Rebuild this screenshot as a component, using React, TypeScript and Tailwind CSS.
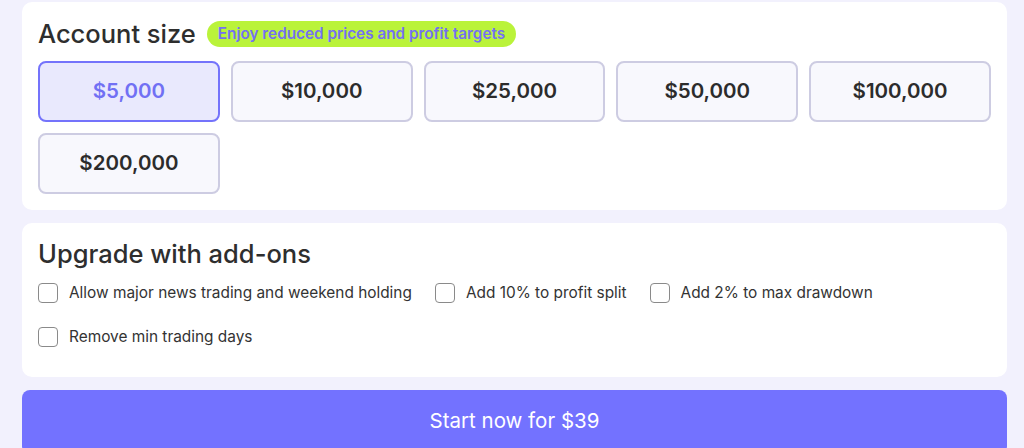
import { useState } from "react";

const sizes = ["$5,000", "$10,000", "$25,000", "$50,000", "$100,000", "$200,000"];

const addons = [
  "Allow major news trading and weekend holding",
  "Add 10% to profit split",
  "Add 2% to max drawdown",
  "Remove min trading days",
];

export default function App() {
  const [selected, setSelected] = useState(0);
  const [checked, setChecked] = useState<boolean[]>([false, false, false, false]);

  return (
    <div
      className="w-[1024px] h-[448px] overflow-hidden bg-[#f2f1fd] pl-[22px] pr-[17px] pt-[2px] flex flex-col gap-[13px]"
      style={{ fontFamily: "Inter, 'Noto Sans', sans-serif" }}
    >
      {/* Account size */}
      <section className="bg-white rounded-[10px] px-4 pt-[16px] pb-4">
        <div className="flex items-center gap-[11px]">
          <h2 className="text-[25.5px] font-medium text-[#2e2e2e] leading-[31px]">Account size</h2>
          <span className="rounded-full bg-[#baf33a] px-[11px] py-[3px] text-[15.3px] font-semibold text-[#7471f2] leading-[20px]">
            Enjoy reduced prices and profit targets
          </span>
        </div>
        <div className="mt-[12px] grid grid-cols-5 gap-x-[11px] gap-y-[11px]">
          {sizes.map((s, i) => (
            <button
              key={s}
              onClick={() => setSelected(i)}
              className={
                i === selected
                  ? "h-[61px] rounded-[8px] border-2 border-[#7473fb] bg-[#e9e9fd] text-[20.5px] font-semibold text-[#7170f4]"
                  : "h-[61px] rounded-[8px] border-2 border-[#cdcce2] bg-[#f8f8fd] text-[20.5px] font-semibold text-[#2c2c2c]"
              }
            >
              {s}
            </button>
          ))}
        </div>
      </section>

      {/* Add-ons */}
      <section className="bg-white rounded-[10px] px-4 pt-[15px] pb-[30px]">
        <h2 className="text-[25.5px] font-medium text-[#2e2e2e] leading-[32px]">Upgrade with add-ons</h2>
        <div className="mt-[13px] flex flex-wrap gap-x-[23px] gap-y-[24px] w-[940px]">
          {addons.map((a, i) => (
            <label key={a} className="flex items-center gap-[11px] cursor-pointer">
              <input
                type="checkbox"
                checked={checked[i]}
                onChange={() => setChecked(checked.map((c, j) => (j === i ? !c : c)))}
                className="appearance-none w-[20px] h-[20px] rounded-[4px] border border-[#8a8a8a] bg-white checked:bg-[#7372ff] checked:border-[#7372ff]"
              />
              <span className="text-[15.4px] text-[#333333] leading-[20px]">{a}</span>
            </label>
          ))}
        </div>
      </section>

      <button className="shrink-0 h-[64px] rounded-[8px] bg-[#7372ff] text-white text-[20.5px] pb-[2px]">
        Start now for $39
      </button>
    </div>
  );
}
